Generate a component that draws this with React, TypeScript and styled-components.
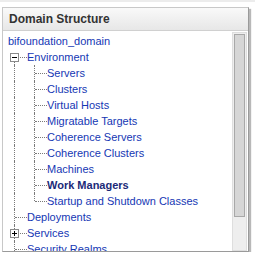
import styled, { createGlobalStyle } from 'styled-components';

const GlobalStyle = createGlobalStyle`
    html, body {
        margin: 0;
        padding: 0;
        background: #ffffff;
    }
    body {
        font-family: "Liberation Sans", Arial, sans-serif;
        font-size: 11px;
    }
`;

type Cell = 'pipe' | 'tee' | 'elbow' | 'open' | 'closed';

interface TreeRow {
    label: string;
    cells: Cell[];
    bold?: boolean;
    below?: boolean;
    above?: boolean;
}

const rows: TreeRow[] = [
    { label: 'bifoundation_domain', cells: [] },
    { label: 'Environment', cells: ['open'], below: true },
    { label: 'Servers', cells: ['pipe', 'tee'] },
    { label: 'Clusters', cells: ['pipe', 'tee'] },
    { label: 'Virtual Hosts', cells: ['pipe', 'tee'] },
    { label: 'Migratable Targets', cells: ['pipe', 'tee'] },
    { label: 'Coherence Servers', cells: ['pipe', 'tee'] },
    { label: 'Coherence Clusters', cells: ['pipe', 'tee'] },
    { label: 'Machines', cells: ['pipe', 'tee'] },
    { label: 'Work Managers', cells: ['pipe', 'tee'], bold: true },
    { label: 'Startup and Shutdown Classes', cells: ['pipe', 'elbow'] },
    { label: 'Deployments', cells: ['tee'] },
    { label: 'Services', cells: ['closed'], above: true, below: true },
    { label: 'Security Realms', cells: ['tee'] },
];

const TopRule = styled.div`
    height: 2px;
    background: #ececec;
`;

const Panel = styled.div`
    margin: 5px 0 0 2px;
    width: 245px;
    height: 243px;
    border: 1px solid #c8c8c8;
    border-right-color: #9a9a9a;
    border-bottom-color: #9a9a9a;
    box-shadow: 2px 2px 1px #b8b8b8;
    display: flex;
    flex-direction: column;
    background: #ffffff;
`;

const Header = styled.div`
    height: 22px;
    display: flex;
    align-items: center;
    padding-left: 6px;
    background: linear-gradient(#f9f9f9, #e7e7e7);
    border-bottom: 1px solid #d0d0d0;
    font-size: 12px;
    font-weight: bold;
    color: #333333;
`;

const Body = styled.div`
    flex: 1;
    display: flex;
    overflow: hidden;
`;

const Tree = styled.div`
    flex: 1;
    padding: 2px 0 0 4px;
    overflow: hidden;
`;

const Row = styled.div`
    display: flex;
    height: 16px;
    align-items: stretch;
`;

const Indent = styled.div<{ $kind: Cell; $above?: boolean; $below?: boolean }>`
    position: relative;
    width: 20px;
    flex: none;

    &::before {
        content: '';
        position: absolute;
        left: 7px;
        top: ${p => (p.$kind === 'open' || p.$kind === 'closed') ? (p.$above ? '0' : '12px') : '0'};
        bottom: ${p => p.$kind === 'elbow' ? '8px' : (p.$kind === 'open' || p.$kind === 'closed') && !p.$below ? '4px' : '0'};
        border-left: 1px dotted #7a7a7a;
        display: ${p => (p.$kind === 'open' || p.$kind === 'closed') && !p.$above && !p.$below ? 'none' : 'block'};
    }

    &::after {
        content: '';
        position: absolute;
        left: 8px;
        right: 0;
        top: 8px;
        border-top: 1px dotted #7a7a7a;
        display: ${p => p.$kind === 'pipe' ? 'none' : 'block'};
    }
`;

const Expander = styled.span`
    position: absolute;
    left: 3px;
    top: 4px;
    width: 7px;
    height: 7px;
    border: 1px solid #8a8a8a;
    background: #ffffff;
    z-index: 1;
    display: flex;
    align-items: center;
    justify-content: center;
`;

const Sign = styled.span<{ $open: boolean }>`
    position: relative;
    width: 5px;
    height: 1px;
    background: #000000;

    &::after {
        content: '';
        position: absolute;
        left: 2px;
        top: -2px;
        width: 1px;
        height: 5px;
        background: #000000;
        display: ${p => p.$open ? 'none' : 'block'};
    }
`;

const Label = styled.a<{ $bold?: boolean }>`
    line-height: 16px;
    white-space: nowrap;
    margin-left: ${p => p.$bold ? '0' : '0'};
    padding-left: 0;
    color: ${p => p.$bold ? '#1b2a78' : '#1537b4'};
    font-weight: ${p => p.$bold ? 'bold' : 'normal'};
    text-decoration: none;
`;

const RootLabel = styled(Label)`
    margin-left: 1px;
`;

const Scrollbar = styled.div`
    width: 11px;
    margin: 1px 1px 0 0;
    border: 1px solid #dedede;
    background: #eeeeee;
    padding: 1px;
    display: flex;
    flex-direction: column;
`;

const Thumb = styled.div`
    height: 181px;
    border: 1px solid #a8a8a8;
    background: #d6d6d6;
`;

const App = () => {
    return (
        <>
            <GlobalStyle />
            <TopRule />
            <Panel>
                <Header>Domain Structure</Header>
                <Body>
                    <Tree>
                        {rows.map(row => (
                            <Row key={row.label}>
                                {row.cells.map((cell, i) => (
                                    <Indent key={i} $kind={cell} $above={row.above} $below={row.below}>
                                        {(cell === 'open' || cell === 'closed') && (
                                            <Expander>
                                                <Sign $open={cell === 'open'} />
                                            </Expander>
                                        )}
                                    </Indent>
                                ))}
                                {row.cells.length === 0
                                    ? <RootLabel>{row.label}</RootLabel>
                                    : <Label $bold={row.bold}>{row.label}</Label>}
                            </Row>
                        ))}
                    </Tree>
                    <Scrollbar>
                        <Thumb />
                    </Scrollbar>
                </Body>
            </Panel>
        </>
    );
};

export default App;
